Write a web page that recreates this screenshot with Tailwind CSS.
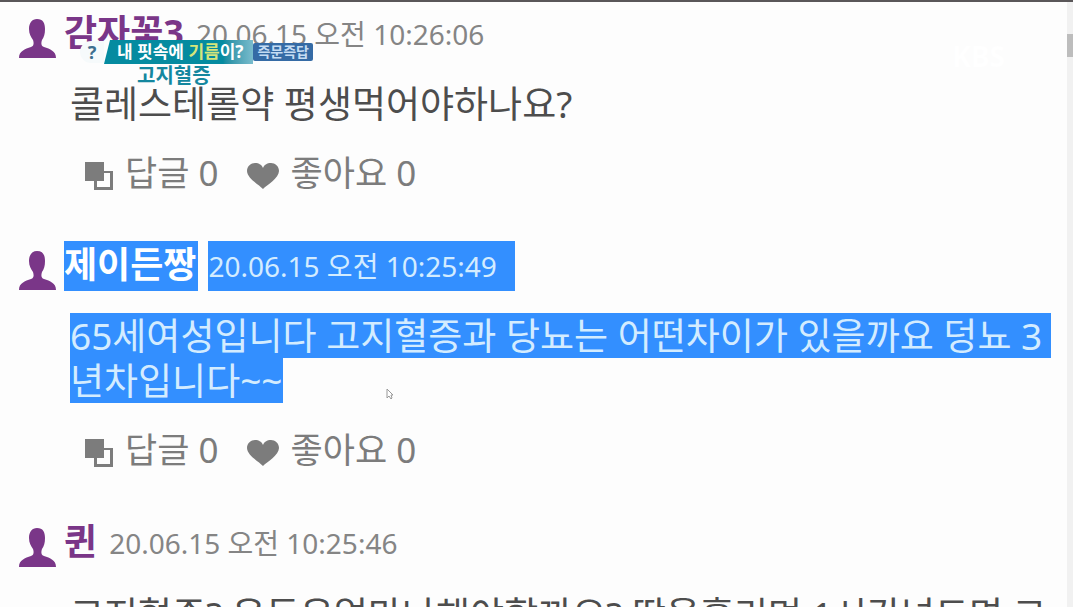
<!DOCTYPE html>
<html lang="ko">
<head>
    <meta charset="UTF-8">
    <meta name="viewport" content="width=device-width, initial-scale=1.0">
    <title>고지혈증 즉문즉답</title>
    <script src="https://cdn.jsdelivr.net/npm/@tailwindcss/browser@4"></script>
</head>
<body class="font-['Noto_Sans','Noto_Sans_CJK_KR',sans-serif] bg-[#fdfdfd]">
    <svg class="hidden">
        <symbol id="user" viewBox="0 0 37 39">
            <path d="M18 0c6 0 8 4 8 10 0 5-1 8-3 11-1 3-1 6 2 7 6 2 12 4 12 11H0c0-7 6-9 12-11 3-1 3-4 2-7-2-3-4-6-4-11C10 4 13 0 18 0z" fill="currentColor"/>
        </symbol>
        <symbol id="reply" viewBox="0 0 28 28">
            <path d="M0 0h19v9h9v19H9v-9H0zM19 11v8h-7v6h13V11z" fill="currentColor" fill-rule="evenodd"/>
        </symbol>
        <symbol id="heart" viewBox="0 0 32 26">
            <path d="M16 26C12 22 0 15 0 8c0-5 4-8 8-8s7 2 8 5c1-3 4-5 8-5s8 3 8 8c0 7-12 14-16 18z" fill="currentColor"/>
        </symbol>
    </svg>

    <div class="relative flex h-screen overflow-hidden border-t-2 border-[#5a5759]">
        <main class="flex-1 min-w-0 pl-[19px] pr-4 pt-[7px] flex flex-col gap-11">

            <article class="shrink-0">
                <header class="flex h-[50px]">
                    <svg class="w-[37px] h-[39px] mt-[10px] mr-2 text-[#7a3688]"><use href="#user"/></svg>
                    <a href="#" class="text-4xl/[48px] font-bold text-[#7a3688]">감자꽃3</a>
                    <time class="ml-3 text-[28px]/[50px] text-[#858585]">20.06.15 오전 10:26:06</time>
                </header>
                <p class="mt-[22px] ml-[51px] text-[37px]/[45px] text-[#4d4d4d] whitespace-nowrap">콜레스테롤약 평생먹어야하나요?</p>
                <div class="mt-6 mb-[2px] ml-[66px] flex gap-7 text-[35px]/[45px] text-[#7c7c7c]">
                    <button class="flex items-center gap-3"><svg class="w-7 h-7 mt-[6px]"><use href="#reply"/></svg>답글 0</button>
                    <button class="flex items-center gap-3"><svg class="w-8 h-[26px] mt-[6px]"><use href="#heart"/></svg>좋아요 0</button>
                </div>
            </article>

            <!-- selected comment -->
            <article class="shrink-0">
                <header class="flex h-[50px]">
                    <svg class="w-[37px] h-[39px] mt-[10px] mr-2 text-[#7a3688]"><use href="#user"/></svg>
                    <a href="#" class="pr-[2px] bg-[#338fff] text-4xl/[48px] font-bold text-white">제이든짱</a>
                    <time class="ml-[10px] pr-[18px] bg-[#338fff] text-[28px]/[50px] text-[#d3ecff]">20.06.15 오전 10:25:49</time>
                </header>
                <p class="mt-[22px] ml-[51px] flex flex-col items-start text-[37px]/[45px] text-[#d3ecff] whitespace-nowrap">
                    <span class="w-full bg-[#338fff]">65세여성입니다 고지혈증과 당뇨는 어떤차이가 있을까요 덩뇨 3</span>
                    <span class="bg-[#338fff]">년차입니다~~</span>
                </p>
                <div class="mt-6 mb-[2px] ml-[66px] flex gap-7 text-[35px]/[45px] text-[#7c7c7c]">
                    <button class="flex items-center gap-3"><svg class="w-7 h-7 mt-[6px]"><use href="#reply"/></svg>답글 0</button>
                    <button class="flex items-center gap-3"><svg class="w-8 h-[26px] mt-[6px]"><use href="#heart"/></svg>좋아요 0</button>
                </div>
            </article>

            <article class="shrink-0">
                <header class="flex h-[50px]">
                    <svg class="w-[37px] h-[39px] mt-[10px] mr-2 text-[#7a3688]"><use href="#user"/></svg>
                    <a href="#" class="text-4xl/[48px] font-bold text-[#7a3688]">퀸</a>
                    <time class="ml-3 text-[28px]/[50px] text-[#858585]">20.06.15 오전 10:25:46</time>
                </header>
                <p class="mt-6 ml-[51px] text-[37px]/[45px] text-[#4d4d4d] whitespace-nowrap">고지혈증? 운동은얼마나해야할까요? 땀을흘리며 1시간넘도면 그</p>
            </article>
        </main>

        <!-- scrollbar -->
        <div class="w-[6px] shrink-0 bg-[#f1f1f1] pt-8">
            <div class="h-[23px] bg-[#bdbdbd]"></div>
        </div>

        <!-- broadcast caption -->
        <div class="absolute left-20 top-[38px] font-bold">
            <div class="flex items-center h-6 whitespace-nowrap">
                <span class="w-6 h-[22px] rounded-l-full bg-[#f6fafb] text-center text-lg/[22px] text-[#3d6f8f]">?</span>
                <span class="h-6 pl-[13px] pr-[10px] bg-linear-to-r from-[#058ba0] from-80% to-[#79bccd] [clip-path:polygon(6px_0,100%_0,100%_100%,0_100%)] text-[17px]/6 text-white">내 핏속에 <span class="text-[#d5e67a]">기름</span>이?</span>
                <span class="h-[18px] px-1 rounded-xs bg-[#356ba5] text-sm/[18px] text-[#c5dcf3]">즉문즉답</span>
            </div>
            <div class="ml-[57px] text-xl/6 text-[#14879f] [text-shadow:0_0_2px_white,0_0_2px_white]">고지혈증</div>
        </div>

        <div class="absolute right-[68px] top-[38px] text-[28px]/8 font-bold text-white">KBS</div>

        <svg class="absolute left-[386px] top-[386px] w-2 h-3" viewBox="0 0 8 12">
            <path d="M1 1v9l2-2 2 3 1-1-1-3h2z" fill="#fff" stroke="#999"/>
        </svg>
    </div>
</body>
</html>
